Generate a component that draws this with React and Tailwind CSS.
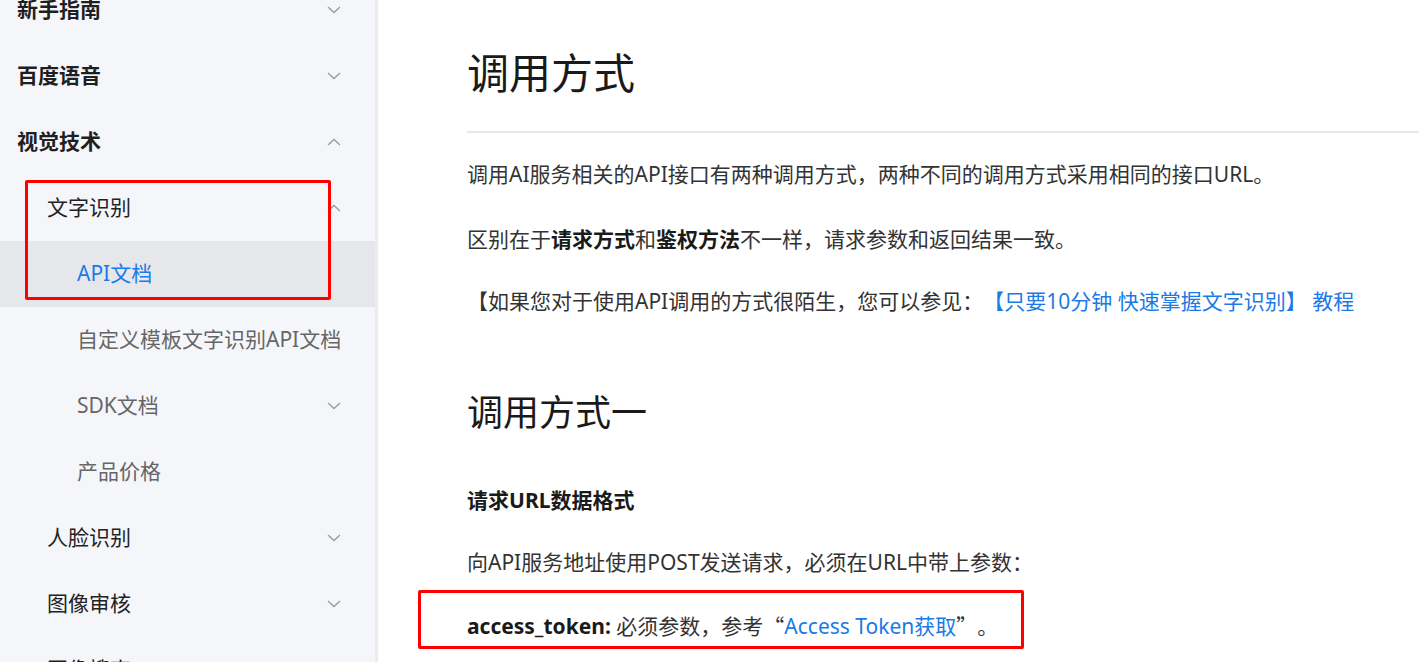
import React from "react";

const FONT = { fontFamily: '"Noto Sans", "Noto Sans CJK SC", sans-serif' };
const CJK = { fontFamily: '"Noto Sans CJK SC", sans-serif' };

function Chevron({ up }) {
  return (
    <svg width="14" height="8" viewBox="0 0 14 8" className="shrink-0">
      <polyline
        points={up ? "1,7 7,1.5 13,7" : "1,1 7,6.5 13,1"}
        fill="none"
        stroke="#9a9a9a"
        strokeWidth="1.3"
      />
    </svg>
  );
}

const items = [
  { label: "新手指南", level: 1, chev: "down" },
  { label: "百度语音", level: 1, chev: "down" },
  { label: "视觉技术", level: 1, chev: "up" },
  { label: "文字识别", level: 2, chev: "up" },
  { label: "API文档", level: 3, active: true },
  { label: "自定义模板文字识别API文档", level: 3 },
  { label: "SDK文档", level: 3, chev: "down" },
  { label: "产品价格", level: 3 },
  { label: "人脸识别", level: 2, chev: "down" },
  { label: "图像审核", level: 2, chev: "down" },
  { label: "图像搜索", level: 2, chev: "down" },
];

function NavRow({ item }) {
  const base = "h-[66px] flex items-center justify-between pr-[34px] text-[21px] whitespace-nowrap";
  let cls = base;
  let textCls = "";
  if (item.level === 1) {
    cls += " pl-[17px]";
    textCls = "font-bold text-[#1f1f1f]";
  } else if (item.level === 2) {
    cls += " pl-[47px]";
    textCls = "text-[#222]";
  } else {
    cls += " pl-[77px]";
    textCls = item.active ? "text-[#1b7ae6]" : "text-[#666]";
  }
  if (item.active) cls += " bg-[#e6e7eb]";
  return (
    <div className={cls}>
      <span className={textCls}>{item.label}</span>
      {item.chev && <Chevron up={item.chev === "up"} />}
    </div>
  );
}

export default function App() {
  return (
    <div
      className="relative flex h-[662px] w-[1419px] overflow-hidden bg-white [text-spacing-trim:space-all]"
      style={FONT}
    >
      <aside className="w-[378px] shrink-0 h-full bg-[#f5f6fa] border-r-[3px] border-[#ececef] overflow-hidden">
        <div className="-mt-[23px]">
          {items.map((it) => (
            <NavRow key={it.label} item={it} />
          ))}
        </div>
      </aside>

      <main className="flex-1 pl-[89px] pt-[44px] text-[21px] text-[#333]">
        <h1 className="text-[42px] leading-[58px] text-[#1a1a1a] font-normal">调用方式</h1>
        <div className="mt-[29px] h-[2px] bg-[#e8e8e8]" />
        <p className="mt-[25px] leading-[32px] whitespace-nowrap">
          调用AI服务相关的API接口有两种调用方式，两种不同的调用方式采用相同的接口URL。
        </p>
        <p className="mt-[33px] leading-[32px] whitespace-nowrap">
          区别在于<b className="font-bold text-[#1a1a1a]">请求方式</b>和
          <b className="font-bold text-[#1a1a1a]">鉴权方法</b>不一样，请求参数和返回结果一致。
        </p>
        <p className="mt-[30px] leading-[32px] whitespace-nowrap">
          【如果您对于使用API调用的方式很陌生，您可以参见：
          <span className="text-[#1b7ae6]">【只要10分钟 快速掌握文字识别】 教程</span>
        </p>
        <h2 className="mt-[69px] text-[36px] leading-[54px] text-[#1a1a1a] font-normal">调用方式一</h2>
        <p className="mt-[44px] leading-[32px] font-bold text-[#1a1a1a]">请求URL数据格式</p>
        <p className="mt-[30px] leading-[32px] whitespace-nowrap">
          向API服务地址使用POST发送请求，必须在URL中带上参数：
        </p>
        <p className="mt-[31px] leading-[32px] whitespace-nowrap">
          <b className="font-bold text-[#1a1a1a]">access_token:</b> 必须参数，参考
          <span style={CJK}>“</span>
          <span className="text-[#1b7ae6]">Access Token获取</span>
          <span style={CJK}>”。</span>
        </p>
      </main>

      <div className="pointer-events-none absolute left-[25px] top-[180px] w-[306px] h-[120px] border-[3px] border-[#ff0000] rounded-[2px]" />
      <div className="pointer-events-none absolute left-[418px] top-[590px] w-[606px] h-[59px] border-[3px] border-[#ff0000] rounded-[2px]" />
    </div>
  );
}
